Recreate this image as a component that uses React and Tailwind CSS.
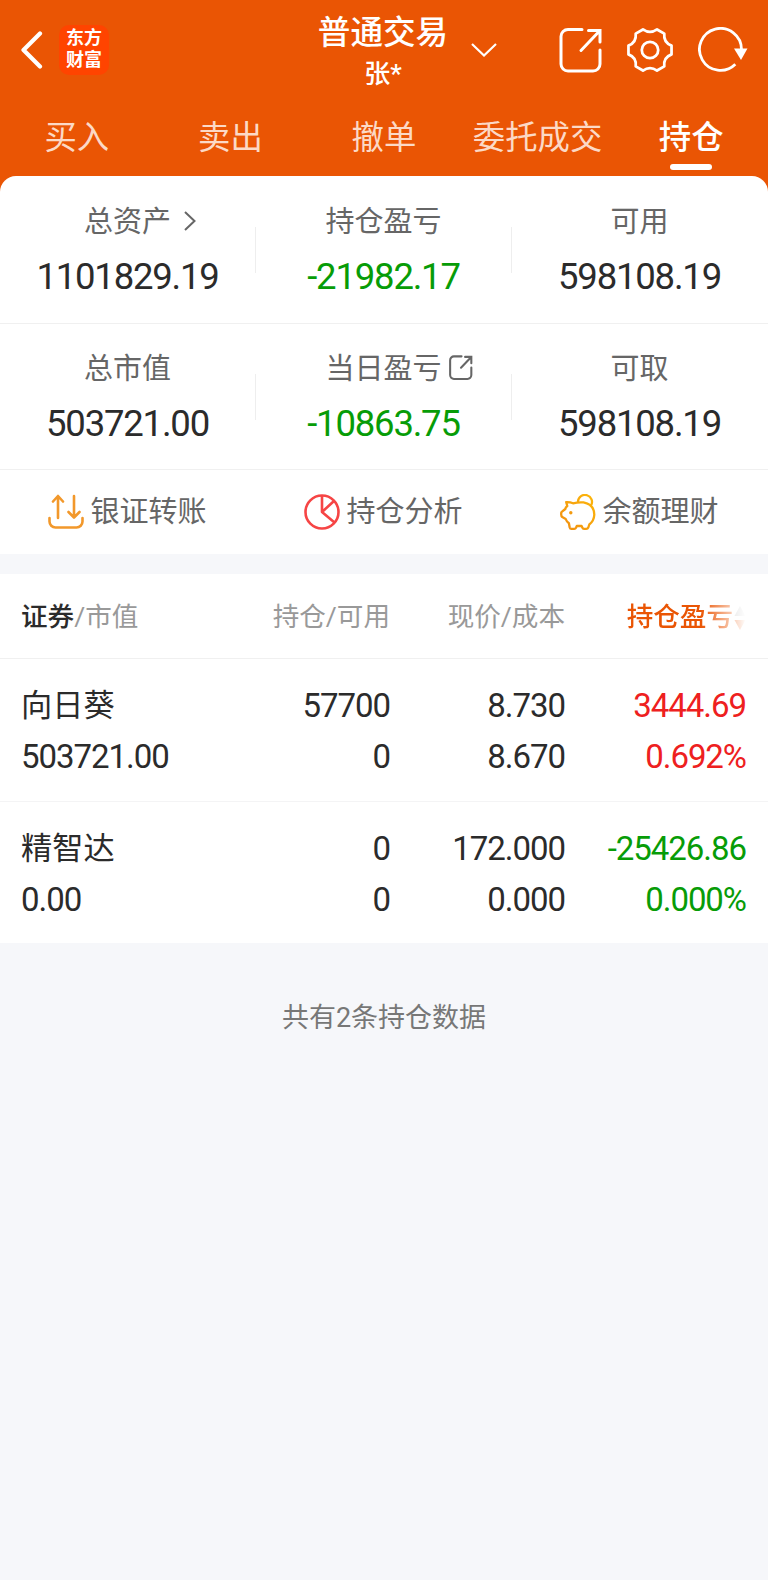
import { Fragment } from 'react';

const TABS = ['买入', '卖出', '撤单', '委托成交', '持仓'];

const STATS = [
  [
    { label: '总资产', value: '1101829.19', icon: 'chevron' },
    { label: '持仓盈亏', value: '-21982.17', down: true },
    { label: '可用', value: '598108.19' },
  ],
  [
    { label: '总市值', value: '503721.00' },
    { label: '当日盈亏', value: '-10863.75', icon: 'share', down: true },
    { label: '可取', value: '598108.19' },
  ],
];

const HOLDINGS = [
  {
    name: '向日葵',
    marketValue: '503721.00',
    amount: '57700',
    available: '0',
    price: '8.730',
    cost: '8.670',
    profit: '3444.69',
    percent: '0.692%',
    color: 'text-[#ee2020]',
  },
  {
    name: '精智达',
    marketValue: '0.00',
    amount: '0',
    available: '0',
    price: '172.000',
    cost: '0.000',
    profit: '-25426.86',
    percent: '0.000%',
    color: 'text-[#079c07]',
  },
];

function BackIcon() {
  return (
    <svg width="22" height="40" viewBox="0 0 22 40" fill="none" stroke="#fff" strokeWidth="4.2" strokeLinecap="round" strokeLinejoin="round">
      <path d="M19 3.500 2.500 20 19 36.500" />
    </svg>
  );
}

function ShareIcon({ className, strokeWidth }) {
  return (
    <svg className={className} viewBox="0 0 44 46" fill="none" stroke="currentColor" strokeWidth={strokeWidth} strokeLinecap="round">
      <path d="M23 2.500H9a7 7 0 0 0-7 7V37a7 7 0 0 0 7 7h25a7 7 0 0 0 7-7V23" />
      <path d="M22 23.500 40 4.500M29.500 3.500H41V15" />
    </svg>
  );
}

function GearIcon() {
  return (
    <svg width="48" height="46" viewBox="-0.5 -0.5 49 47" fill="none" stroke="#fff" strokeWidth="2.8" strokeLinejoin="round">
      <path d="M16.800 2Q24 7 31.200 2L38.600 6.300Q37.600 15.400 46 18.500V27.500Q37.600 30.600 38.600 39.700L31.200 44Q24 39 16.800 44L9.400 39.700Q10.400 30.600 2 27.500V18.500Q10.400 15.400 9.400 6.300Z" />
      <circle cx="24" cy="23" r="8.400" />
    </svg>
  );
}

function RefreshIcon() {
  return (
    <svg width="50" height="46" viewBox="0 0 50 46" fill="none" stroke="#fff" strokeWidth="2.8">
      <path d="M43.500 22.500A21 21 0 1 0 37.300 37.300" />
      <path d="M36 21.500h13.500L43 33Z" fill="#fff" stroke="none" />
    </svg>
  );
}

function TransferIcon() {
  return (
    <svg width="36" height="36" viewBox="0 0 36 36" fill="none" stroke="#f2982b" strokeWidth="2.6" strokeLinecap="round" strokeLinejoin="round">
      <path d="M10 24V2.500M5 7.500l5-5.500 5 5.500" />
      <path d="M26 2v21M20.500 18l5.500 5.500 5.500-5.500" />
      <path d="M1.500 24v3.500a6 6 0 0 0 6 6h21a6 6 0 0 0 6-6V24" />
    </svg>
  );
}

function AnalysisIcon() {
  return (
    <svg width="36" height="36" viewBox="0 0 36 36" fill="none" stroke="#f64545" strokeWidth="2.6" strokeLinejoin="round">
      <circle cx="18" cy="18" r="16.500" />
      <path d="M18 1.500V18l12.500 10.500M18 18 30 7" />
    </svg>
  );
}

function PiggyIcon() {
  return (
    <svg width="36" height="36" viewBox="0 0 36 36" fill="none" stroke="url(#piggy)" strokeWidth="2.3" strokeLinecap="round" strokeLinejoin="round">
      <linearGradient id="piggy" x1="0" y1="36" x2="36" y2="0" gradientUnits="userSpaceOnUse">
        <stop stopColor="#f08c10" />
        <stop offset="1" stopColor="#fdb90a" />
      </linearGradient>
      <path d="M6.200 8.200Q10 8 13 9.300Q18 8 23.500 8.400Q34.300 10.500 34.300 20.800Q34 27 29.300 30.500L28.300 33.500Q27.700 34.800 26.300 34.800H24Q22.800 34.800 22.300 33.500L21.600 32H16.800L16 33.800Q15.500 34.800 14.300 34.800H11.500Q10 34.800 9.700 33.500L8.900 29.200Q6.500 27.500 5.700 25L2.300 23Q1.200 22.200 1.200 20.500V19Q1.200 18.200 2 17.600L5.300 15Q5.500 13.300 7.300 12Z" />
      <path d="M18 7.500A7 7 0 1 1 31 11.500" />
      <circle cx="10.800" cy="18.800" r="1.700" fill="#f39a0f" stroke="none" />
    </svg>
  );
}

const ACTIONS = [
  { label: '银证转账', Icon: TransferIcon },
  { label: '持仓分析', Icon: AnalysisIcon },
  { label: '余额理财', Icon: PiggyIcon },
];

function Header() {
  return (
    <header className="h-[176px] bg-[#ea5504] text-white">
      <div className="flex h-[99px] items-center">
        <div className="flex w-[318px] items-center pl-[21px]">
          <BackIcon />
          <div className="ml-4 mt-px flex h-[50px] w-[50px] flex-col items-center justify-center rounded-[10px] bg-[#ff4400] pb-[2px] text-[18px] font-bold leading-[22px]">
            <span>东方</span>
            <span>财富</span>
          </div>
        </div>
        <div className="flex w-[130px] flex-col items-center pt-[9px]">
          <h1 className="whitespace-nowrap text-[32.6px] font-medium leading-[40px]">普通交易</h1>
          <span className="text-[26px] font-medium leading-[42px]">张*</span>
        </div>
        <svg className="ml-[23px]" width="26" height="14" viewBox="0 0 26 14" fill="none" stroke="#fff" strokeWidth="2.2">
          <path d="M1 1l12 11.500L25 1" />
        </svg>
        <div className="ml-auto flex items-center pr-[20px]">
          <ShareIcon className="h-[46px] w-[44px]" strokeWidth="3" />
          <span className="ml-[23px]"><GearIcon /></span>
          <span className="ml-[24px]"><RefreshIcon /></span>
        </div>
      </div>
      <nav className="grid grid-cols-5">
        {TABS.map((tab) => {
          const active = tab === '持仓';
          return (
            <div key={tab} className="flex flex-col items-center pt-[17px]">
              <span className={`whitespace-nowrap text-[32.4px] leading-[44px] ${active ? 'font-medium text-white' : 'text-[#fcd9c6]'}`}>
                {tab}
              </span>
              {active && <span className="mt-[4px] h-[6px] w-[42px] rounded-full bg-white" />}
            </div>
          );
        })}
      </nav>
    </header>
  );
}

function Stat({ label, value, icon, down }) {
  return (
    <div className="flex w-[255px] flex-col items-center">
      <div className="flex items-center text-[29px] leading-[30px] text-[#666]">
        {label}
        {/* negative margin keeps the label itself centred */}
        {icon === 'chevron' && (
          <svg className="-mr-[25px] -mt-[2px] ml-[13px]" width="12" height="20" viewBox="0 0 12 20" fill="none" stroke="#666" strokeWidth="2">
            <path d="M1 1l9.500 9L1 19" />
          </svg>
        )}
        {icon === 'share' && <ShareIcon className="-mr-[31px] -mt-[3px] ml-[7px] h-[25px] w-[24px]" strokeWidth="3.800" />}
      </div>
      <div className={`mt-[20px] text-[36.5px] leading-[40px] tracking-[-1.2px] ${down ? 'text-[#079c07]' : 'text-[#2b2b2b]'}`}>{value}</div>
    </div>
  );
}

function Summary() {
  return (
    <div className="bg-[#ea5504]">
      <section className="rounded-t-[16px] bg-white">
        {STATS.map((row, i) => (
          <div key={i} className={`flex border-b border-[#f0f0f0] ${i === 0 ? 'h-[148px] pt-[31px]' : 'h-[146px] pt-[30px]'}`}>
            {row.map((stat, j) => (
              <Fragment key={stat.label}>
                {j > 0 && <div className="mt-[20px] h-[46px] w-px bg-[#eee]" />}
                <Stat {...stat} />
              </Fragment>
            ))}
          </div>
        ))}
        <div className="grid h-[84px] grid-cols-3">
          {ACTIONS.map(({ label, Icon }) => (
            <div key={label} className="flex items-center justify-center gap-[6px] pr-px text-[29px] leading-[40px] text-[#666]">
              <Icon />
              {label}
            </div>
          ))}
        </div>
      </section>
    </div>
  );
}

const COLS = 'grid grid-cols-[199px_170px_175px_181px] pl-[21px]';

function HoldingsTable() {
  return (
    <section className="mt-[20px] bg-white">
      <div className={`${COLS} h-[85px] items-center border-b border-[#f0f0f0] pt-[2px] text-[26.6px] leading-[40px] text-[#999]`}>
        <div>
          <span className="font-medium text-[#2b2b2b]">证券</span>/市值
        </div>
        <div className="text-right">持仓/可用</div>
        <div className="text-right">现价/成本</div>
        <div className="flex items-center justify-end">
          {/* the sorted column fades out at the screen edge */}
          <div className="flex items-center bg-white mask-r-from-[62%] mask-r-to-[100%]">
            <span className="font-medium text-[#ea5504]">持仓盈亏</span>
            <svg className="ml-px" width="12" height="26" viewBox="0 0 12 26">
              <path d="M6 2l5.500 10H0.500Z" fill="#bbb" />
              <path d="M6 26L0.500 16h11Z" fill="#ea5504" />
            </svg>
          </div>
        </div>
      </div>
      {HOLDINGS.map((h) => (
        <div key={h.name} className={`${COLS} h-[143px] border-b border-[#f4f4f5] pt-[21px] text-[33px] leading-[51px] tracking-[-1.05px] text-[#2b2b2b] last:h-[141px] last:border-b-0`}>
          <div>
            <div className="text-[31.2px] tracking-normal">{h.name}</div>
            <div>{h.marketValue}</div>
          </div>
          <div className="text-right">
            <div>{h.amount}</div>
            <div>{h.available}</div>
          </div>
          <div className="text-right">
            <div>{h.price}</div>
            <div>{h.cost}</div>
          </div>
          <div className={`text-right ${h.color}`}>
            <div>{h.profit}</div>
            <div>{h.percent}</div>
          </div>
        </div>
      ))}
    </section>
  );
}

export default function App() {
  return (
    <div className="min-h-[1580px] w-[768px] bg-[#f6f7fa] font-[Roboto,'Noto_Sans_CJK_SC',sans-serif]">
      <Header />
      <Summary />
      <HoldingsTable />
      <p className="mt-[55px] text-center text-[27px] leading-[40px] text-[#777]">共有{HOLDINGS.length}条持仓数据</p>
    </div>
  );
}
